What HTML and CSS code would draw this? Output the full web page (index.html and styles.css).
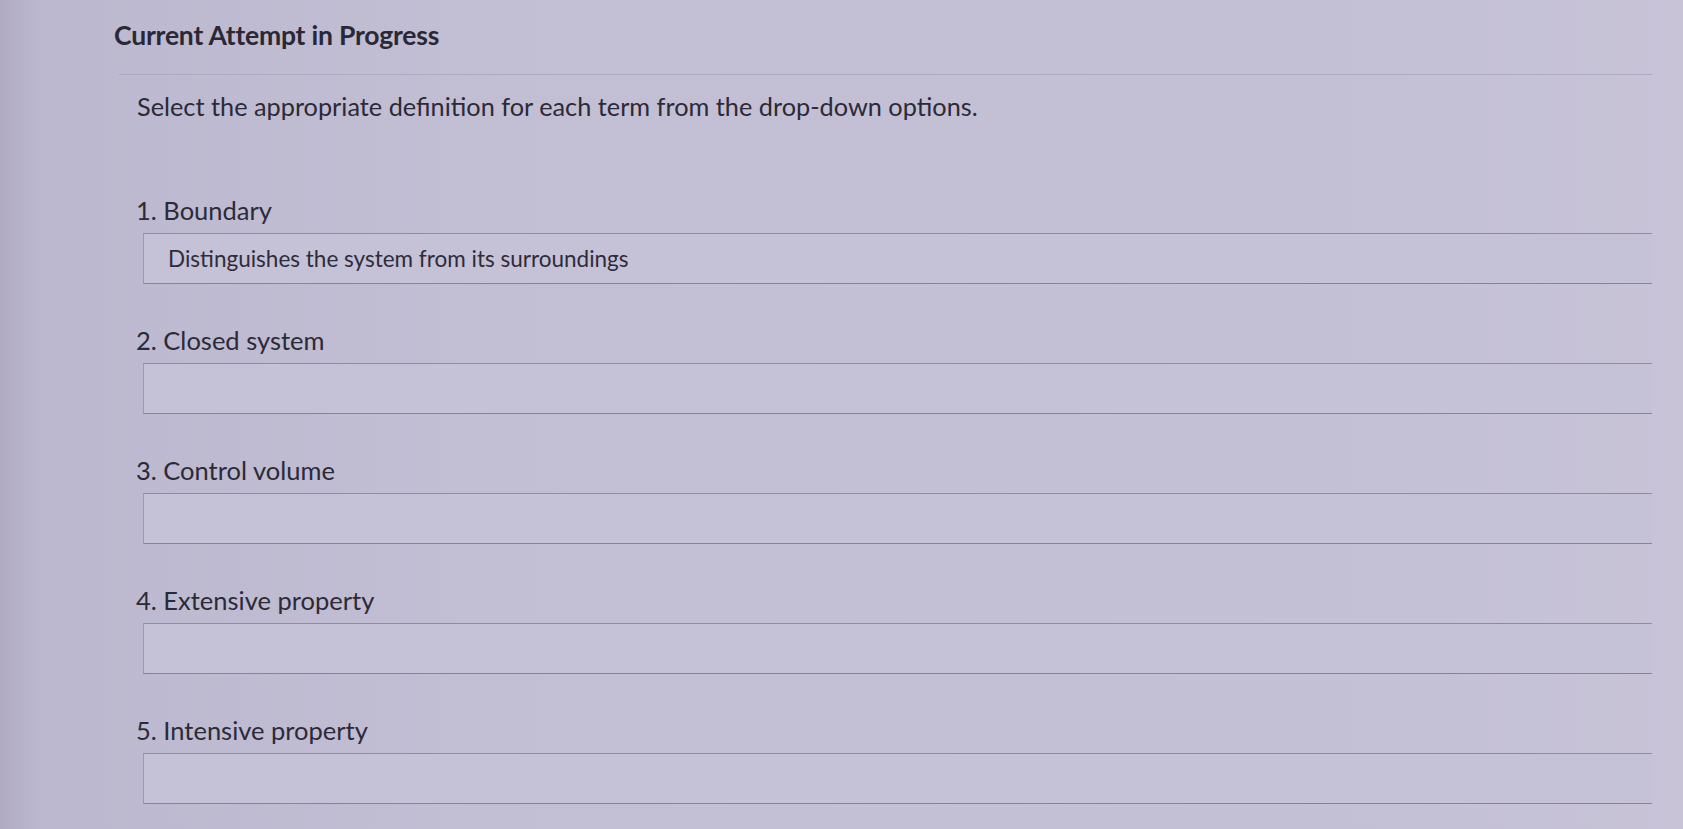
FILE: index.html
```html
<!DOCTYPE html>
<html lang="en">
<head>
<meta charset="utf-8">
<title>Current Attempt in Progress</title>
<link rel="stylesheet" href="styles.css">
</head>
<body>
<main class="page">
  <h1 class="title">Current Attempt in Progress</h1>
  <div class="rule"></div>
  <p class="instructions">Select the appropriate definition for each term from the drop-down options.</p>
  <ol class="terms">
    <li class="term">
      <div class="term-label">1. Boundary</div>
      <div class="select">Distinguishes the system from its surroundings</div>
    </li>
    <li class="term">
      <div class="term-label">2. Closed system</div>
      <div class="select"></div>
    </li>
    <li class="term">
      <div class="term-label">3. Control volume</div>
      <div class="select"></div>
    </li>
    <li class="term">
      <div class="term-label">4. Extensive property</div>
      <div class="select"></div>
    </li>
    <li class="term">
      <div class="term-label">5. Intensive property</div>
      <div class="select"></div>
    </li>
  </ol>
</main>
</body>
</html>
```

FILE: styles.css
```css
html, body {
  margin: 0;
  padding: 0;
  height: 100%;
}

body {
  background: linear-gradient(90deg, #b0abc3 0px, #bcb8cf 40px, #c2bed4 30%, #c4c0d6 85%, #c8c3d7 100%);
  font-family: Lato, "Open Sans", "Liberation Sans", sans-serif;
  color: #2c2a37;
  overflow: hidden;
}

.page {
  padding: 20px 31px 0 114px;
}

.title {
  margin: 0;
  font-size: 26.5px;
  font-weight: 700;
  line-height: 30px;
  letter-spacing: -0.2px;
  color: #2a2835;
}

.rule {
  margin: 24px 0 0 5px;
  border-top: 1px solid #aeaac2;
}

.instructions {
  margin: 16px 0 0 23px;
  font-size: 25.3px;
  line-height: 30px;
  color: #2c2a37;
}

.terms {
  list-style: none;
  margin: 75px 0 0 22px;
  padding: 0;
  display: flex;
  flex-direction: column;
  gap: 42px;
}

.term {
  display: flex;
  flex-direction: column;
  gap: 9px;
}

.term-label {
  font-size: 25.5px;
  line-height: 28px;
  color: #2c2a37;
}

.select {
  margin-left: 7px;
  height: 51px;
  box-sizing: border-box;
  display: flex;
  align-items: center;
  padding-left: 24px;
  border-top: 1.5px solid #8f8ba3;
  border-bottom: 1.5px solid #87839b;
  border-left: 1px solid #9d99b1;
  background: #c5c1d7;
  font-size: 22.5px;
  color: #2e2c3a;
}
```
